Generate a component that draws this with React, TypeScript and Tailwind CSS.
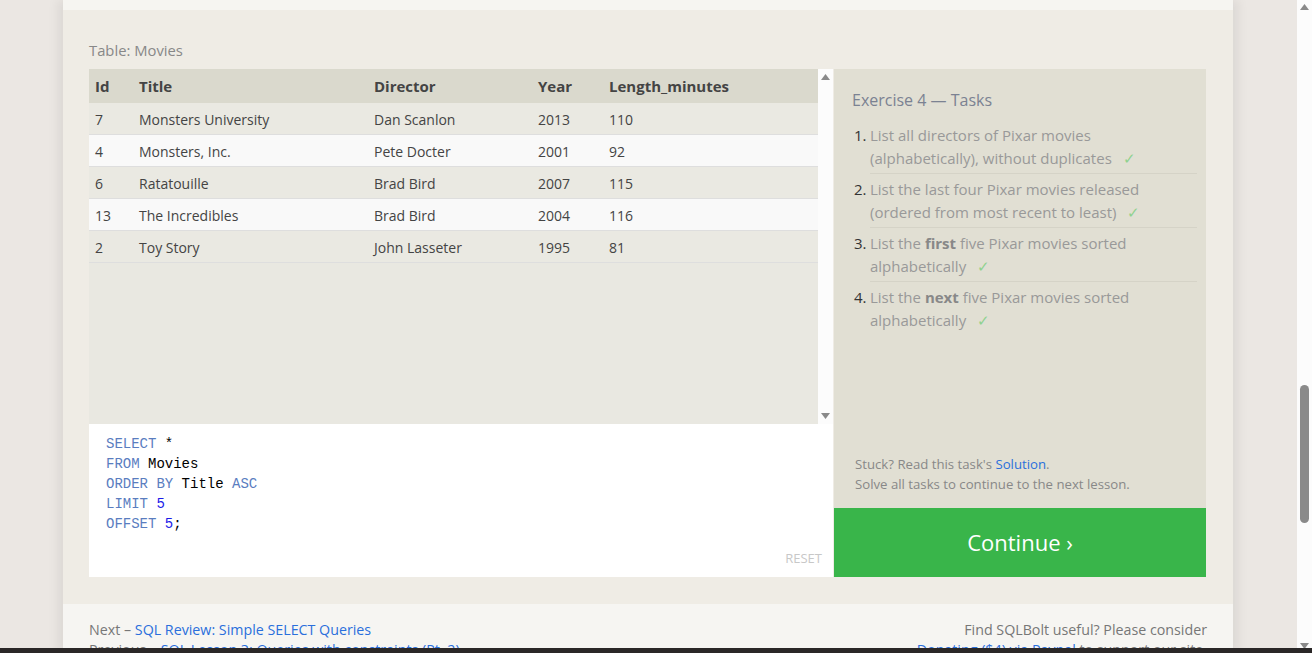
import React from 'react';

type Movie = {
  id: number;
  title: string;
  director: string;
  year: number;
  length: number;
};

const MOVIES: Movie[] = [
  { id: 7, title: 'Monsters University', director: 'Dan Scanlon', year: 2013, length: 110 },
  { id: 4, title: 'Monsters, Inc.', director: 'Pete Docter', year: 2001, length: 92 },
  { id: 6, title: 'Ratatouille', director: 'Brad Bird', year: 2007, length: 115 },
  { id: 13, title: 'The Incredibles', director: 'Brad Bird', year: 2004, length: 116 },
  { id: 2, title: 'Toy Story', director: 'John Lasseter', year: 1995, length: 81 },
];

const TASKS: React.ReactNode[] = [
  <>
    List all directors of Pixar movies (alphabetically), without duplicates
  </>,
  <>
    List the last four Pixar movies released (ordered from most recent to least)
  </>,
  <>
    List the <b className="font-bold text-[#888]">first</b> five Pixar movies sorted alphabetically
  </>,
  <>
    List the <b className="font-bold text-[#888]">next</b> five Pixar movies sorted alphabetically
  </>,
];

function Arrow({ dir }: { dir: 'up' | 'down' }) {
  return (
    <svg width="9" height="6" viewBox="0 0 9 6" className="block">
      {dir === 'up' ? (
        <path d="M4.5 0 L9 6 L0 6 Z" fill="#8a8a8a" />
      ) : (
        <path d="M0 0 L9 0 L4.5 6 Z" fill="#8a8a8a" />
      )}
    </svg>
  );
}

function ResultsTable() {
  return (
    <div className="flex h-[355px]">
      <div className="flex-1 bg-[#e9e8e1]">
        <div className="flex h-[34px] items-center bg-[#dad9cd] text-[15px] font-bold text-[#444]">
          <div className="w-[50px] pl-[6px]">Id</div>
          <div className="w-[235px]">Title</div>
          <div className="w-[164px]">Director</div>
          <div className="w-[71px]">Year</div>
          <div className="flex-1">Length_minutes</div>
        </div>
        {MOVIES.map((m, i) => (
          <div
            key={m.id}
            className={`flex h-[32px] items-center border-b border-[#dedede] pt-[2px] text-[14px] text-[#444] ${
              i % 2 === 0 ? 'bg-[#eae9e2]' : 'bg-[#f9f9f9]'
            }`}
          >
            <div className="w-[50px] pl-[6px]">{m.id}</div>
            <div className="w-[235px]">{m.title}</div>
            <div className="w-[164px]">{m.director}</div>
            <div className="w-[71px]">{m.year}</div>
            <div className="flex-1">{m.length}</div>
          </div>
        ))}
      </div>
      <div className="flex w-[15px] flex-col items-center justify-between bg-[#fcfcfc] py-[5px]">
        <Arrow dir="up" />
        <Arrow dir="down" />
      </div>
    </div>
  );
}

function CodeEditor() {
  const kw = 'text-[#5a7dbf]';
  const num = 'text-[#1a1ae8]';
  return (
    <div className="relative h-[153px] bg-white">
      <pre className="pl-[17px] pt-[10px] font-['Liberation_Mono','DejaVu_Sans_Mono',monospace] text-[14px] leading-[20px] text-black">
        <span className={kw}>SELECT</span> *{'\n'}
        <span className={kw}>FROM</span> Movies{'\n'}
        <span className={kw}>ORDER BY</span> Title <span className={kw}>ASC</span>
        {'\n'}
        <span className={kw}>LIMIT</span> <span className={num}>5</span>
        {'\n'}
        <span className={kw}>OFFSET</span> <span className={num}>5</span>;
      </pre>
      <div className="absolute bottom-[9px] right-[11px] text-[13px] uppercase text-[#c8c8c8]">Reset</div>
    </div>
  );
}

function TasksPanel() {
  return (
    <div className="flex w-[372px] flex-col">
      <div className="flex h-[439px] flex-col justify-between bg-[#e1dfd3] pb-[14px] pl-[18px] pr-[9px] pt-[20px]">
        <div>
          <h3 className="text-[16px] leading-[22px] text-[#7b8292]">Exercise 4 — Tasks</h3>
          <ol className="mt-[9px] pl-[18px]">
            {TASKS.map((t, i) => (
              <li
                key={i}
                className={`flex py-[4px] text-[15px] leading-[22.5px] text-[#999] ${
                  i < TASKS.length - 1 ? 'border-b border-[#d5d3c7]' : ''
                }`}
              >
                <span className="-ml-[16px] w-[16px] shrink-0 text-[#333]">{i + 1}.</span>
                <span className="pr-[40px]">
                  {t}
                  <span className="ml-[11px] text-[#8fd28f]">✓</span>
                </span>
              </li>
            ))}
          </ol>
        </div>
        <div className="pl-[3px] text-[13.2px] leading-[20px] text-[#888]">
          <p>
            Stuck? Read this task's <a className="text-[#2a6fdc]">Solution</a>.
          </p>
          <p>Solve all tasks to continue to the next lesson.</p>
        </div>
      </div>
      <button
        type="button"
        className="flex h-[69px] items-center justify-center bg-[#39b54a] text-[22px] text-white"
      >
        Continue ›
      </button>
    </div>
  );
}

export default function App() {
  return (
    <div className="relative flex h-[653px] w-full overflow-hidden bg-[#ebe7e3] font-['Open_Sans','Noto_Sans',sans-serif]">
      <div className="flex flex-1 justify-center">
        <div className="ml-[-1px] w-[1170px] shadow-[-6px_0_10px_rgba(0,0,0,0.06),6px_0_10px_rgba(0,0,0,0.06)]">
          <div className="h-[10px] bg-[#f6f5f1]" />
          <section className="bg-[#efece5] pb-[27px] pl-[26px] pr-[27px] pt-[30px]">
            <div className="text-[14.8px] leading-[20px] text-[#888]">Table: Movies</div>
            <div className="mt-[9px] flex gap-[1px]">
              <div className="flex-1">
                <ResultsTable />
                <CodeEditor />
              </div>
              <TasksPanel />
            </div>
          </section>
          <footer className="flex justify-between bg-[#f6f5f2] px-[26px] pt-[16px] text-[14.25px] leading-[20px] text-[#777]">
            <div>
              <p>
                Next – <a className="text-[#2a6fdc]">SQL Review: Simple SELECT Queries</a>
              </p>
              <p>
                Previous – <a className="text-[#2a6fdc]">SQL Lesson 3: Queries with constraints (Pt. 2)</a>
              </p>
            </div>
            <div className="text-right">
              <p>Find SQLBolt useful? Please consider</p>
              <p>
                <a className="text-[#2a6fdc]">Donating ($4) via Paypal</a> to support our site.
              </p>
            </div>
          </footer>
        </div>
      </div>
      <div className="relative flex w-[15px] flex-col items-center justify-between bg-[#fcfcfc] py-[4px]">
        <Arrow dir="up" />
        <div className="absolute left-[3px] top-[385px] h-[138px] w-[9px] rounded-full bg-[#8a8a8a]" />
        <Arrow dir="down" />
      </div>
      <div className="absolute bottom-0 left-0 h-[5px] w-full bg-[#2a2727]" />
    </div>
  );
}
